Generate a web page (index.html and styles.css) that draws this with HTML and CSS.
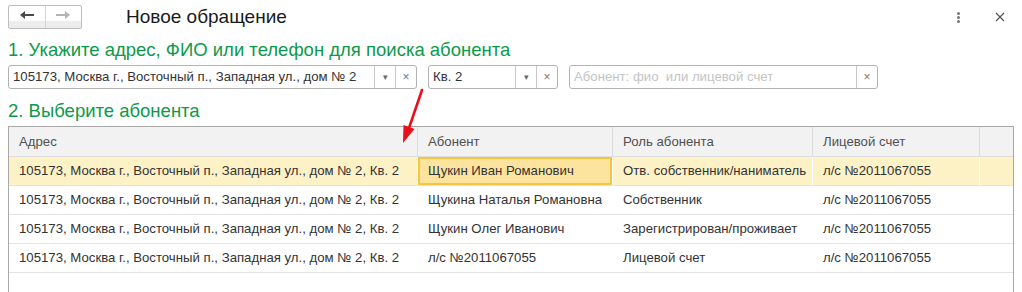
FILE: index.html
```html
<!doctype html>
<html>
<head>
<meta charset="utf-8">
<title>Новое обращение</title>
<link rel="stylesheet" href="styles.css">
</head>

<body>
<div class="topbar">
	<div class="nav">
		<a href="javascript:;" class="nav-btn">
			<svg width="14" height="8" viewBox="0 0 14 8"><path d="M0 4 L5 0 L5 3 L14 3 L14 5 L5 5 L5 8 Z" fill="#4a4a4a"/></svg>
		</a>
		<a href="javascript:;" class="nav-btn">
			<svg width="14" height="8" viewBox="0 0 14 8"><path d="M14 4 L9 0 L9 3 L0 3 L0 5 L9 5 L9 8 Z" fill="#b4b4b4"/></svg>
		</a>
	</div>
	<div class="title">Новое обращение</div>
	<span class="kebab"><i></i><i></i><i></i></span>
	<span class="close">
		<svg width="10" height="10" viewBox="0 0 10 10"><path d="M1 1 L9 9 M9 1 L1 9" stroke="#555" stroke-width="1.2"/></svg>
	</span>
</div>

<div class="main">
	<div class="step">1. Укажите адрес, ФИО или телефон для поиска абонента</div>
	<div class="fields">
		<div class="field f-addr">
			<span class="val">105173, Москва г., Восточный п., Западная ул., дом № 2</span>
			<span class="fbtn drop">&#9662;</span>
			<span class="fbtn clr">&times;</span>
		</div>
		<div class="field f-flat">
			<span class="val">Кв. 2</span>
			<span class="fbtn drop">&#9662;</span>
			<span class="fbtn clr">&times;</span>
		</div>
		<div class="field f-search">
			<span class="val hint">Абонент: фио&nbsp; или лицевой счет</span>
			<span class="fbtn clr">&times;</span>
		</div>
	</div>

	<div class="step step2">2. Выберите абонента</div>
	<div class="grid">
		<div class="row head">
			<div>Адрес</div><div>Абонент</div><div>Роль абонента</div><div>Лицевой счет</div><div></div>
		</div>
		<div class="row current">
			<div>105173, Москва г., Восточный п., Западная ул., дом № 2, Кв. 2</div>
			<div class="focus">Щукин Иван Романович</div>
			<div>Отв. собственник/наниматель</div>
			<div>л/с №2011067055</div>
			<div></div>
		</div>
		<div class="row">
			<div>105173, Москва г., Восточный п., Западная ул., дом № 2, Кв. 2</div>
			<div>Щукина Наталья Романовна</div>
			<div>Собственник</div>
			<div>л/с №2011067055</div>
			<div></div>
		</div>
		<div class="row">
			<div>105173, Москва г., Восточный п., Западная ул., дом № 2, Кв. 2</div>
			<div>Щукин Олег Иванович</div>
			<div>Зарегистрирован/проживает</div>
			<div>л/с №2011067055</div>
			<div></div>
		</div>
		<div class="row">
			<div>105173, Москва г., Восточный п., Западная ул., дом № 2, Кв. 2</div>
			<div>л/с №2011067055</div>
			<div>Лицевой счет</div>
			<div>л/с №2011067055</div>
			<div></div>
		</div>
	</div>
</div>

<svg class="pointer" width="40" height="60" viewBox="0 0 40 60">
	<path d="M33 2 L20 40" stroke="#e8101a" stroke-width="2.6" stroke-linecap="round"/>
	<path d="M14 55 L14.5 37 L25.5 41 Z" fill="#e8101a"/>
</svg>
</body>
</html>
```

FILE: styles.css
```css
*{ margin:0; padding:0; box-sizing:border-box;}
html,body{ width:1022px; height:292px; overflow:hidden;}
body{ position:relative; background:#fff; font-family:"Liberation Sans", Arial, sans-serif; font-size:13.2px; color:#333;}

/* шапка формы */
.topbar{ height:34px; display:flex; align-items:center; padding:0 14px 0 8px;}
.nav{ display:flex; width:74px; height:24px; border:1px solid #bdbdbd; border-radius:2px; background:linear-gradient(#fff 0, #fff 65%, #ededed 70%, #ebebeb 100%);}
.nav-btn{ flex:1; display:flex; align-items:center; justify-content:center; padding-bottom:5px;}
.nav-btn + .nav-btn{ border-left:1px solid #d6d6d6;}
.title{ flex:1; margin-left:44px; font-size:19px; color:#1a1a1a;}
.kebab{ width:16px; display:flex; flex-direction:column; align-items:center; gap:1px;}
.kebab i{ display:block; width:3px; height:3px; border-radius:50%; background:#777;}
.close{ width:16px; margin-left:26px; display:flex; justify-content:center;}

.main{ padding:0 8px;}
.step{ margin-top:5px; font-size:18.5px; line-height:22px; color:#0c9a4a;}
.step2{ margin-top:11px;}

/* поля отбора */
.fields{ display:flex; gap:11px; margin-top:4px;}
.field{ display:flex; height:24px; border:1px solid #b3b3b3; border-radius:3px; background:#fff;}
.f-addr{ width:409px;}
.f-flat{ width:130px;}
.f-search{ width:309px;}
.field .val{ flex:1; padding-left:4px; line-height:22px; white-space:nowrap; overflow:hidden;}
.field .hint{ color:#c4c4c4;}
.fbtn{ width:21px; border-left:1px solid #c8c8c8; text-align:center; line-height:22px; color:#666;}
.fbtn.drop{ font-size:9px;}
.fbtn.clr{ font-size:12px; color:#777;}

/* таблица */
.grid{ margin-top:4px; height:166px; border:1px solid #a8a8a8; border-bottom:none;}
.row{ display:grid; grid-template-columns:409px 195px 200px 167px 1fr; height:29px; border-bottom:1px solid #e3e3e3;}
.row div{ padding-left:10px; line-height:28px; white-space:nowrap; overflow:hidden; border-right:1px solid transparent;}
.row div:last-child{ border-right:none;}
.row.head{ height:30px; background:#f2f2f2; color:#505050; border-bottom:1px solid #dedede;}
.row.head div{ line-height:29px; border-right-color:#dcdcdc;}
.row.current{ background:#fdf1c6;}
.row.current div{ border-right-color:#fff;}
.row.current .focus{ background:#fde49e; box-shadow:inset 0 0 0 2px #f4c53e;}

.pointer{ position:absolute; left:389px; top:88px;}
```
